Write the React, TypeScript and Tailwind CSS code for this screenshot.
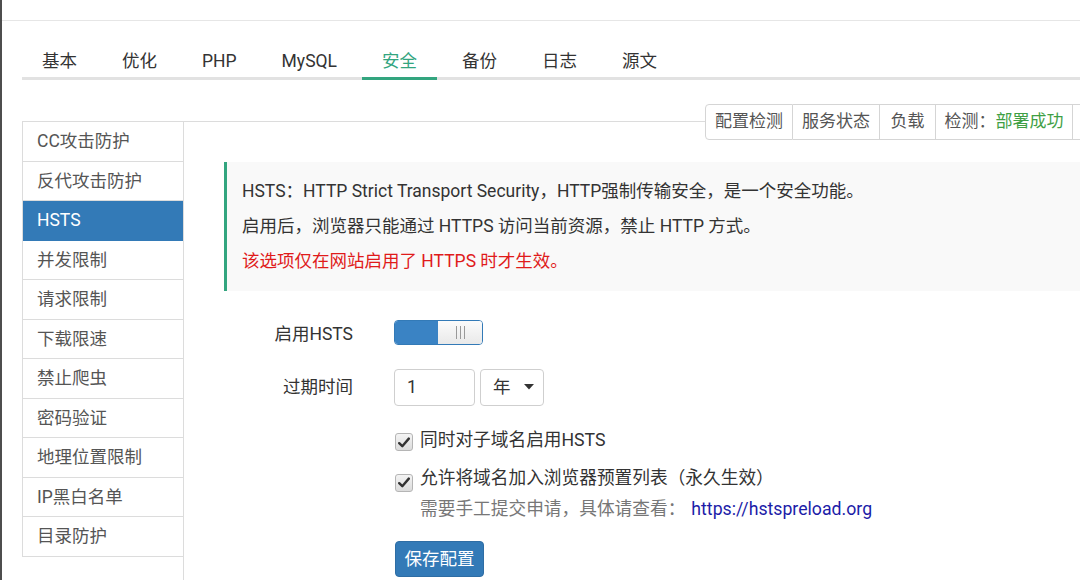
import React from "react";

const tabs = ["基本", "优化", "PHP", "MySQL", "安全", "备份", "日志", "源文"];
const side = ["CC攻击防护", "反代攻击防护", "HSTS", "并发限制", "请求限制", "下载限速", "禁止爬虫", "密码验证", "地理位置限制", "IP黑白名单", "目录防护"];

function Check() {
  return (
    <span className="w-[18px] h-[18px] rounded-[3px] border border-[#b5b5b5] bg-gradient-to-b from-[#f4f4f4] to-[#dcdcdc] flex items-center justify-center shrink-0">
      <svg width="12" height="11" viewBox="0 0 12 11">
        <path d="M1.2 6.2 L4.3 9.2 L10.8 1.6" fill="none" stroke="#333" strokeWidth="2.4" strokeLinecap="round" strokeLinejoin="round" />
      </svg>
    </span>
  );
}

export default function App() {
  return (
    <div className="w-[1080px] h-[580px] overflow-hidden bg-white flex font-['Roboto','Noto_Sans_CJK_SC',sans-serif] text-[#333]">
      <div className="w-[2px] h-full bg-[#4d4d4d] shrink-0" />
      <div className="flex-1 flex flex-col min-w-0">
        <div className="h-[21px] border-b border-[#e6e6e6] shrink-0" />
        <div className="ml-[20px] mt-[21px] flex border-b-[3px] border-[#e2e2e2] shrink-0">
          {tabs.map((t) => (
            <div
              key={t}
              className={
                "px-[20px] mr-[5px] h-[38px] leading-[38px] text-[17.5px] -mb-[3px] border-b-[3px] " +
                (t === "安全" ? "border-[#33a57f] text-[#33a57f]" : "border-transparent text-[#333]")
              }
            >
              {t}
            </div>
          ))}
        </div>
        <div className="ml-[20px] mt-[41px] flex flex-1 min-h-0">
          <div className="w-[161px] shrink-0 border-l border-t border-[#dcdcdc] self-start">
            {side.map((s) => (
              <div
                key={s}
                className={
                  "h-[39.5px] flex items-center pl-[14px] text-[17.5px] border-b " +
                  (s === "HSTS" ? "bg-[#337ab7] text-white border-[#337ab7]" : "text-[#555] border-[#dcdcdc]")
                }
              >
                {s}
              </div>
            ))}
          </div>
          <div className="relative flex-1 border-t border-l border-[#dcdcdc] min-w-0">
            <div className="absolute left-[521px] top-[-18px] flex h-[36px] bg-white text-[17px] text-[#555]">
              <div className="w-[88px] flex items-center justify-center border border-[#d5d5d5] rounded-l-[4px]">配置检测</div>
              <div className="w-[87px] flex items-center justify-center border-y border-r border-[#d5d5d5]">服务状态</div>
              <div className="w-[56px] flex items-center justify-center border-y border-r border-[#d5d5d5]">负载</div>
              <div className="w-[137px] flex items-center justify-center border-y border-r border-[#d5d5d5] whitespace-nowrap">
                检测：<span className="text-[#3f9f45]">部署成功</span>
              </div>
              <div className="w-[40px] border-y border-r border-[#d5d5d5]" />
            </div>

            <div className="ml-[40px] mt-[40px] border-l-[3px] border-[#33a57f] bg-[#f9f9f9] py-[12px] pl-[15px] text-[17.5px] leading-[35px] whitespace-nowrap">
              <div>HSTS：HTTP Strict Transport Security，HTTP强制传输安全，是一个安全功能。</div>
              <div>启用后，浏览器只能通过 HTTPS 访问当前资源，禁止 HTTP 方式。</div>
              <div className="text-[#e01b1b]">该选项仅在网站启用了 HTTPS 时才生效。</div>
            </div>

            <div className="ml-[40px] mt-[22px] flex items-center h-[38px]">
              <div className="w-[129px] text-right text-[17.5px] text-[#333] pt-[4px]">启用HSTS</div>
              <div className="ml-[41px] w-[89px] h-[25px] rounded-[4px] border border-[#337ab7] flex overflow-hidden">
                <div className="w-[43px] bg-[#3a83c4]" />
                <div className="flex-1 bg-gradient-to-b from-[#fbfbfb] to-[#e9e9e9] flex items-center justify-center gap-[3px]">
                  <span className="w-[1px] h-[13px] bg-[#999]" />
                  <span className="w-[1px] h-[13px] bg-[#999]" />
                  <span className="w-[1px] h-[13px] bg-[#999]" />
                </div>
              </div>
            </div>

            <div className="ml-[40px] mt-[17px] flex items-center h-[38px]">
              <div className="w-[129px] text-right text-[17.5px] text-[#333]">过期时间</div>
              <div className="ml-[41px] w-[81px] h-[37px] rounded-[4px] border border-[#cfcfcf] flex items-center pl-[12px] text-[17.5px]">1</div>
              <div className="ml-[5px] w-[64px] h-[37px] rounded-[4px] border border-[#cfcfcf] flex items-center pl-[12px] text-[17.5px]">
                年
                <svg className="ml-[13px]" width="10" height="6" viewBox="0 0 10 6">
                  <path d="M0 0 L10 0 L5 5.5 Z" fill="#333" />
                </svg>
              </div>
            </div>

            <div className="ml-[211px] mt-[18px] text-[17.7px]">
              <div className="h-[32px] flex items-center gap-[7px]">
                <span className="mt-[4px]"><Check /></span>
                <span>同时对子域名启用HSTS</span>
              </div>
              <div className="mt-[5px] h-[34px] flex items-center gap-[7px]">
                <span className="mt-[9px]"><Check /></span>
                <span>允许将域名加入浏览器预置列表（永久生效）</span>
              </div>
              <div className="-mt-[2px] h-[32px] flex items-center pl-[25px] whitespace-nowrap">
                <span className="text-[#777]">需要手工提交申请，具体请查看：</span>
                <span className="ml-[6px] text-[#1c1ca8]">https://hstspreload.org</span>
              </div>
              <div className="mt-[16px] w-[89px] h-[36px] rounded-[4px] bg-[#337ab7] border border-[#2e6da4] text-white flex items-center justify-center text-[17.5px]">
                保存配置
              </div>
            </div>
          </div>
        </div>
      </div>
    </div>
  );
}
